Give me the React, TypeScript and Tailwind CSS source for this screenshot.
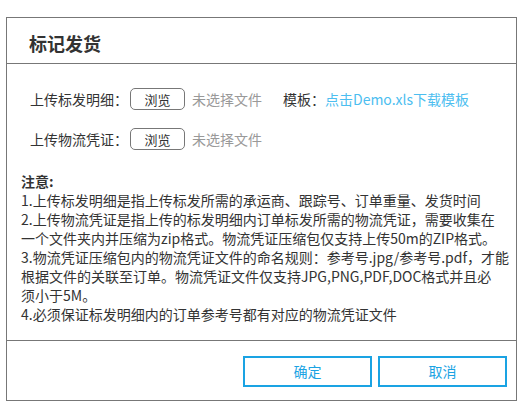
import React from "react";

const font = { fontFamily: '"Noto Sans CJK SC", "Noto Sans", sans-serif' };

export default function App() {
  const notes = [
    "1.上传标发明细是指上传标发所需的承运商、跟踪号、订单重量、发货时间",
    "2.上传物流凭证是指上传的标发明细内订单标发所需的物流凭证，需要收集在",
    "一个文件夹内并压缩为zip格式。物流凭证压缩包仅支持上传50m的ZIP格式。",
    "3.物流凭证压缩包内的物流凭证文件的命名规则：参考号.jpg/参考号.pdf，才能",
    "根据文件的关联至订单。物流凭证文件仅支持JPG,PNG,PDF,DOC格式并且必",
    "须小于5M。",
    "4.必须保证标发明细内的订单参考号都有对应的物流凭证文件",
  ];
  return (
    <div className="w-[527px] h-[416px] bg-white pt-[17px] pl-[6px] text-[#333]" style={font}>
      <div className="w-[511px] border border-[#777] flex flex-col">
        <div className="h-[46px] border-b border-[#777] pl-[22px] pt-[13px]">
          <div className="text-[18px] leading-[24px] font-bold text-[#333]">标记发货</div>
        </div>
        <div className="pt-[24px] pb-[16px] flex flex-col">
          <div className="flex items-center h-[22px] pl-[23px] text-[14px]">
            <span className="w-[100px] whitespace-nowrap">上传标发明细：</span>
            <button className="w-[55px] h-[22px] border border-[#777] rounded-[5px] text-[13px] leading-none text-[#333] bg-white">浏览</button>
            <span className="ml-[7px] text-[#999] whitespace-nowrap">未选择文件</span>
            <span className="ml-[21px] whitespace-nowrap">模板：</span>
            <span className="text-[#4cbef0] whitespace-nowrap">点击Demo.xls下载模板</span>
          </div>
          <div className="flex items-center h-[22px] pl-[23px] mt-[18px] text-[14px]">
            <span className="w-[100px] whitespace-nowrap">上传物流凭证：</span>
            <button className="w-[55px] h-[22px] border border-[#777] rounded-[5px] text-[13px] leading-none text-[#333] bg-white">浏览</button>
            <span className="ml-[7px] text-[#999] whitespace-nowrap">未选择文件</span>
          </div>
          <div className="mt-[22px] pl-[14px] text-[14px] leading-[19px]">
            <div className="font-bold">注意:</div>
            {notes.map((n, i) => (
              <div key={i} className="whitespace-nowrap">{n}</div>
            ))}
          </div>
        </div>
        <div className="border-t border-[#777] flex justify-end gap-[6px] pt-[15px] pb-[13px] pr-[9px]">
          <button className="w-[129px] h-[31px] border-2 border-[#1aa3e3] text-[#1aa3e3] text-[14px] bg-white">确定</button>
          <button className="w-[129px] h-[31px] border-2 border-[#1aa3e3] text-[#1aa3e3] text-[14px] bg-white">取消</button>
        </div>
      </div>
    </div>
  );
}
